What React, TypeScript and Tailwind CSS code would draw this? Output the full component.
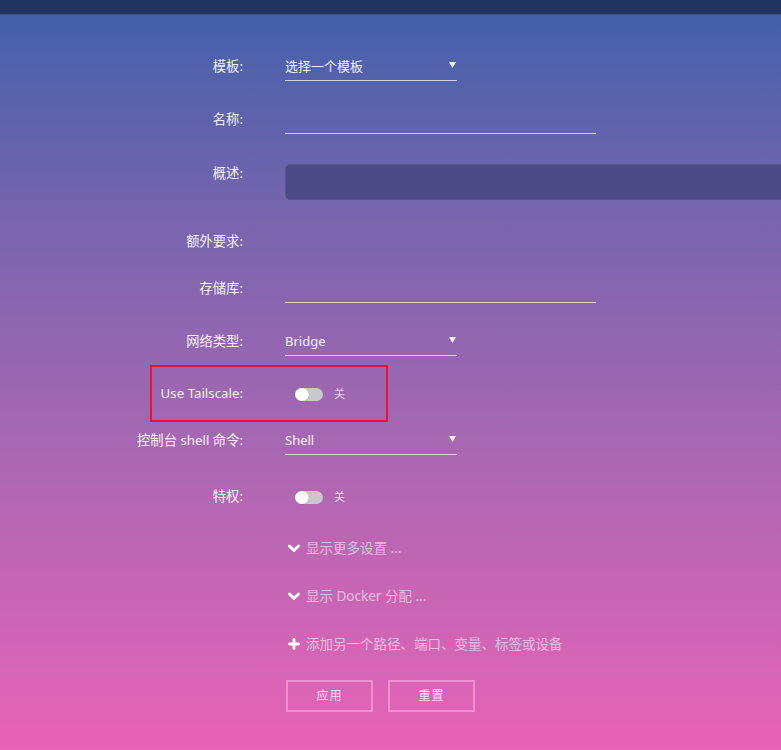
const font = { fontFamily: '"Noto Sans", "Noto Sans CJK SC", sans-serif' };

// every form row is a 28px line; spacing between rows comes from the margin classes
function Row({ label, className, children }: { label?: string; className: string; children?: React.ReactNode }) {
  return (
    <div className={`grid grid-cols-[285px_1fr] items-center h-[28px] ${className}`}>
      <div className="text-right text-[13.3px] text-white/90 pr-[42px]">{label}</div>
      <div>{children}</div>
    </div>
  );
}

function Select({ value }: { value: string }) {
  return (
    <div className="flex h-[28px] w-[172px] items-center justify-between border-b border-white/70 text-[13px] text-white/90">
      <span>{value}</span>
      <svg width="7" height="6" viewBox="0 0 7 6" className="mr-[1px] mb-[3px]">
        <path d="M0 0 H7 L3.5 6 Z" fill="rgba(255,255,255,0.9)" />
      </svg>
    </div>
  );
}

function TextInput() {
  return <div className="h-[28px] w-[311px] border-b border-white/70" />;
}

function Toggle() {
  return (
    <div className="ml-[10px] flex items-center gap-[11px]">
      <div className="relative h-[13px] w-[28px] rounded-full bg-[#c9c9cc]">
        <div className="absolute left-0 top-0 h-[13px] w-[14px] rounded-full bg-white shadow-[0_0_1px_rgba(0,0,0,0.4)]" />
      </div>
      <span className="text-[11px] text-white/75">关</span>
    </div>
  );
}

const Chevron = () => (
  <svg width="12" height="9" viewBox="0 0 12 9">
    <path d="M1.5 2 L6 6.5 L10.5 2" fill="none" stroke="white" strokeWidth="3" strokeLinecap="round" strokeLinejoin="round" />
  </svg>
);

const PlusIcon = () => (
  <svg width="12" height="12" viewBox="0 0 12 12">
    <path d="M6 1.5 V10.5 M1.5 6 H10.5" fill="none" stroke="white" strokeWidth="2.8" strokeLinecap="round" />
  </svg>
);

function LinkRow({ icon, text, className }: { icon: React.ReactNode; text: string; className: string }) {
  return (
    <Row className={className}>
      <div className="flex items-center gap-[6px] pl-[3px] text-[13.5px] text-white/55">
        {icon}
        <span>{text}</span>
      </div>
    </Row>
  );
}

export default function App() {
  return (
    <div className="w-[781px] h-[750px] overflow-hidden" style={font}>
      <div className="h-[15px] bg-[#1f3461] border-b border-[#3a4f82]" />
      <div className="h-[735px] bg-gradient-to-b from-[#4360aa] to-[#e862b6] pt-[38px] flex flex-col">
        <Row label="模板:" className="">
          <Select value="选择一个模板" />
        </Row>
        <Row label="名称:" className="mt-[25px]">
          <TextInput />
        </Row>

        {/* 概述: label sits on the first line of the textarea */}
        <div className="grid grid-cols-[285px_1fr] items-start mt-[26px]">
          <div className="h-[28px] flex items-center justify-end text-[13.3px] text-white/90 pr-[42px]">概述:</div>
          <div className="mt-[4px] h-[36px] w-[620px] rounded-[5px] bg-[#4d4984] border border-[#5a5592]" />
        </div>

        <Row label="额外要求:" className="mt-[28px]" />
        <Row label="存储库:" className="mt-[19px]">
          <TextInput />
        </Row>
        <Row label="网络类型:" className="mt-[25px]">
          <Select value="Bridge" />
        </Row>
        <div className="relative mt-[24px]">
          <div className="absolute left-[150px] top-[-15px] h-[57px] w-[238px] border-2 border-[#e8123c]" />
          <Row label="Use Tailscale:" className="">
            <Toggle />
          </Row>
        </div>
        <Row label="控制台 shell 命令:" className="mt-[19px]">
          <Select value="Shell" />
        </Row>
        <Row label="特权:" className="mt-[28px]">
          <Toggle />
        </Row>

        <LinkRow className="mt-[23px]" icon={<Chevron />} text="显示更多设置 ..." />
        <LinkRow className="mt-[20px]" icon={<Chevron />} text="显示 Docker 分配 ..." />
        <LinkRow className="mt-[20px]" icon={<PlusIcon />} text="添加另一个路径、端口、变量、标签或设备" />

        <div className="grid grid-cols-[285px_1fr] mt-[22px]">
          <div />
          <div className="flex gap-[15px] pl-[1px]">
            <button className="h-[32px] w-[87px] border-2 border-[#f291cf] text-[12px] tracking-[1px] text-white/80">
              应用
            </button>
            <button className="h-[32px] w-[87px] border-2 border-[#f291cf] text-[12px] tracking-[1px] text-white/80">
              重置
            </button>
          </div>
        </div>
      </div>
    </div>
  );
}
